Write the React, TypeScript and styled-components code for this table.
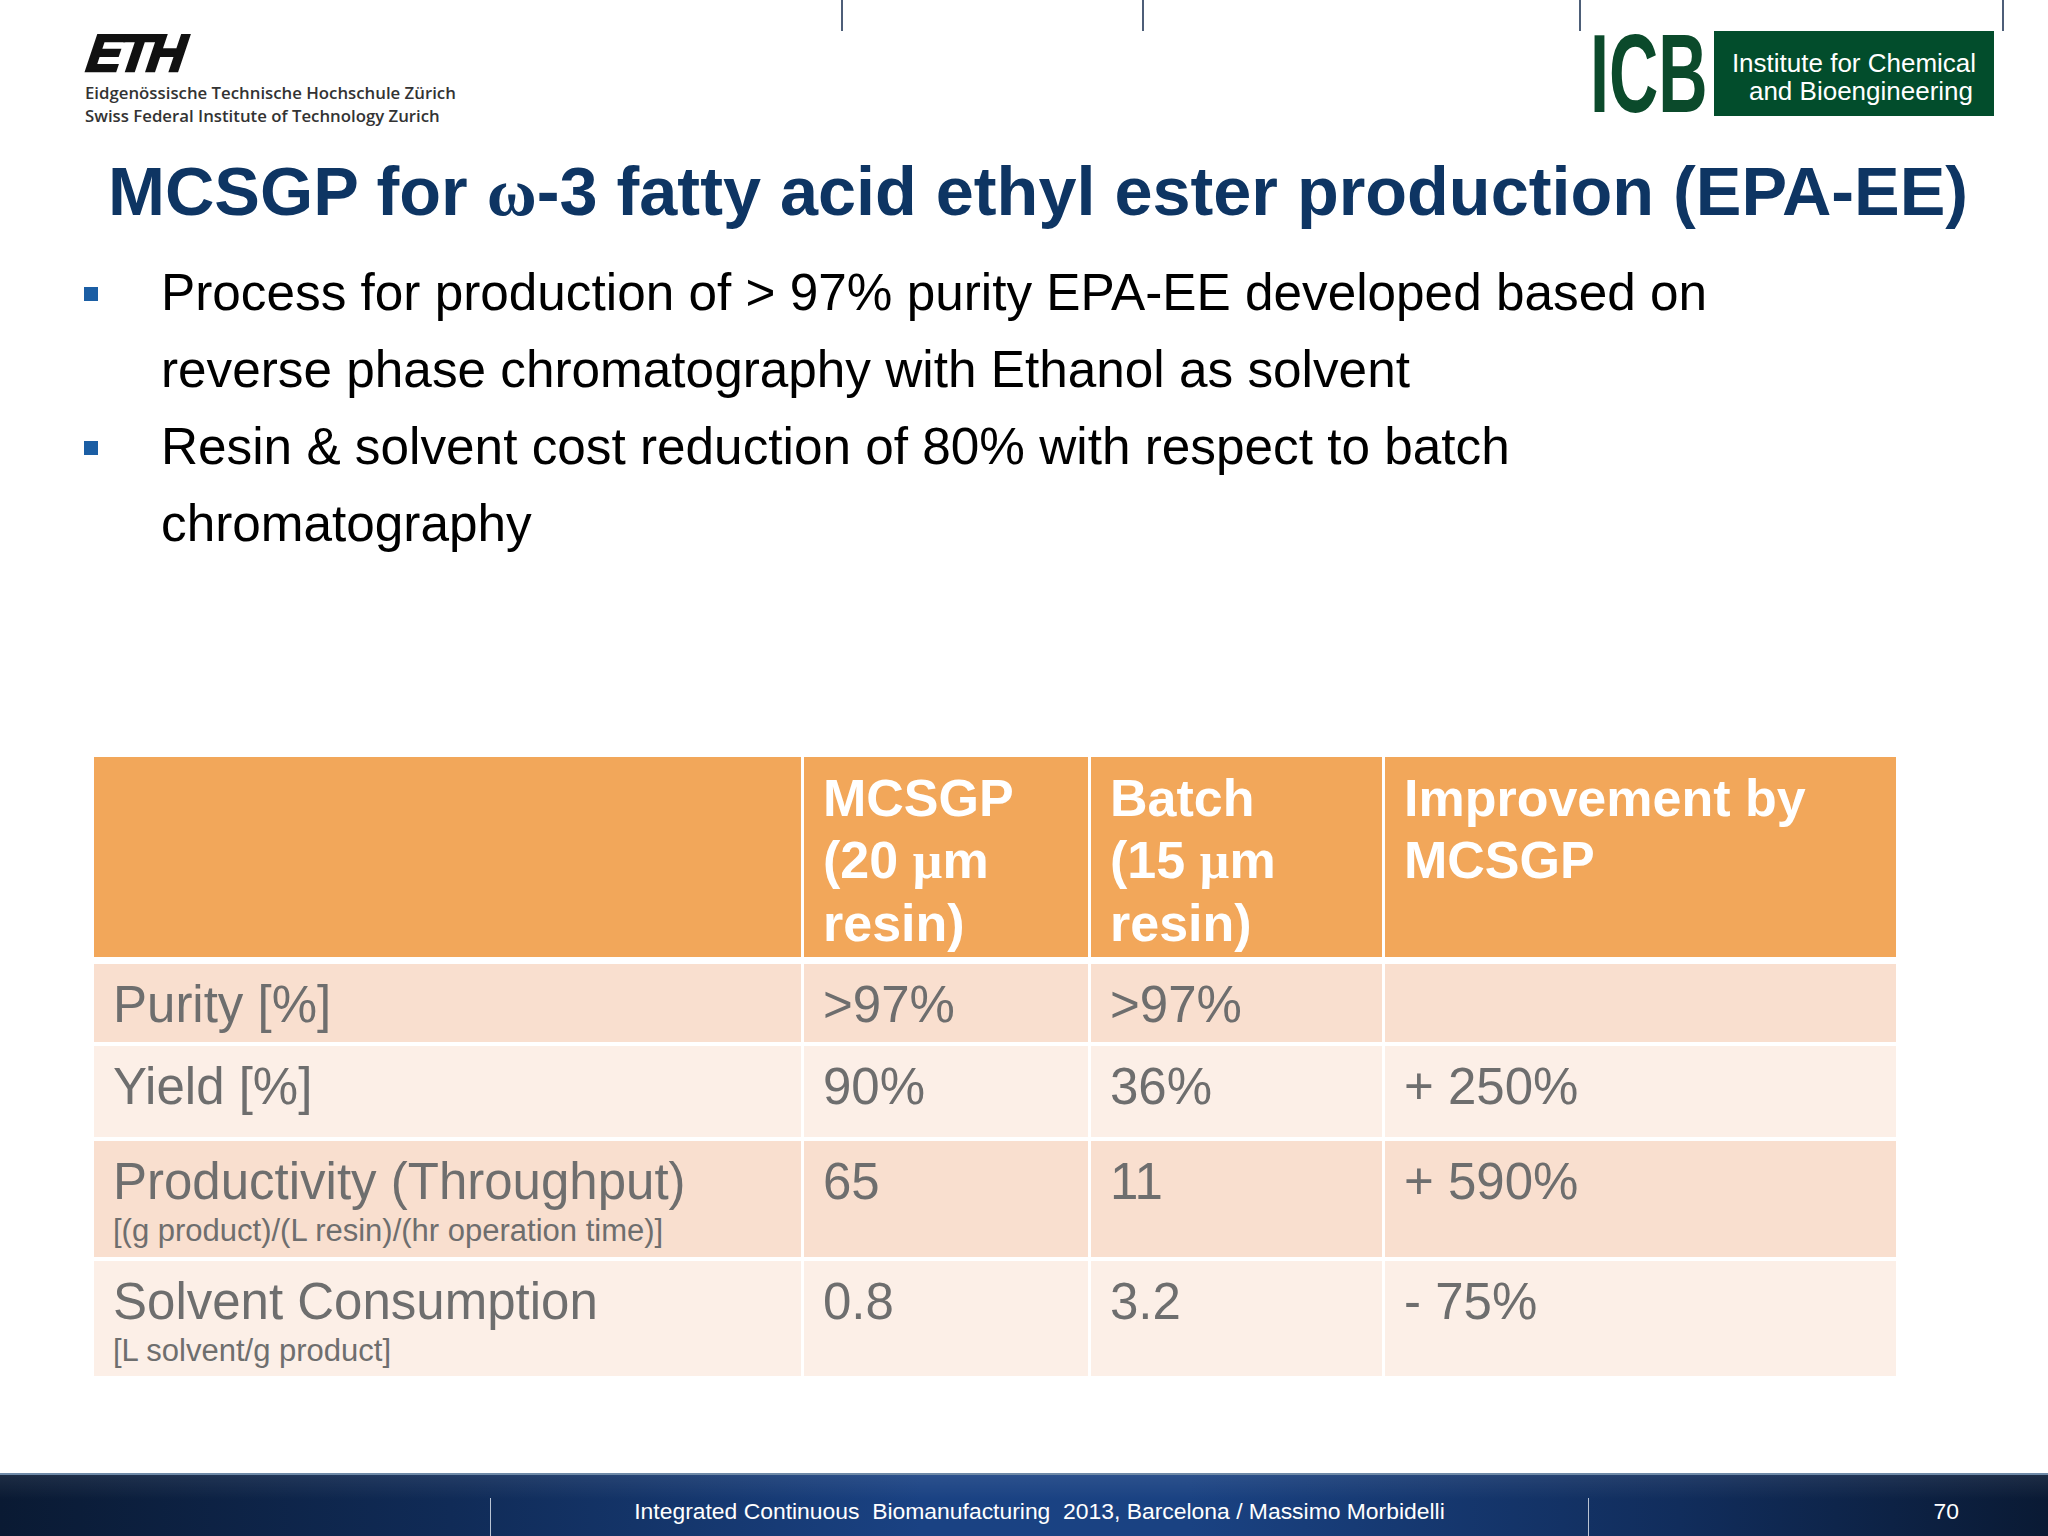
import React from "react";
import styled, { createGlobalStyle } from "styled-components";

const GlobalStyle = createGlobalStyle`
  html, body { margin: 0; padding: 0; background: #ffffff; }
  body { font-family: "Liberation Sans", Arial, sans-serif; }
`;

const Slide = styled.div`
  position: relative;
  width: 2048px;
  height: 1536px;
  display: flex;
  flex-direction: column;
  background: #ffffff;
  overflow: hidden;
`;

const Tick = styled.span<{ $x: number }>`
  position: absolute;
  top: 0;
  left: ${(p) => p.$x}px;
  width: 2px;
  height: 31px;
  background: #4d5e78;
`;

const Header = styled.header`
  display: flex;
  justify-content: space-between;
  align-items: flex-start;
  box-sizing: border-box;
  height: 125px;
  padding: 31px 54px 0 85px;
`;

const EthBlock = styled.div`
  display: flex;
  flex-direction: column;
`;

const EthMark = styled.div`
  margin-top: 2px;
  font-family: "Liberation Sans", Arial, sans-serif;
  font-weight: 700;
  font-style: italic;
  font-size: 52px;
  line-height: 40px;
  letter-spacing: -3px;
  color: #111111;
  -webkit-text-stroke: 2.5px #111111;
  transform: skewX(-8deg);
  transform-origin: left bottom;
`;

const EthTagline = styled.div`
  margin-top: 8px;
  font-family: "Open Sans", "Noto Sans", sans-serif;
  font-weight: 600;
  font-size: 16.8px;
  line-height: 23px;
  color: #333333;
  white-space: nowrap;
`;

const IcbGroup = styled.div`
  display: flex;
  align-items: flex-start;
  gap: 10px;
`;

const IcbMark = styled.div`
  width: 114px;
  height: 84px;
  margin-top: 3px;
`;

const IcbLetters = styled.span`
  display: inline-block;
  font-family: "Liberation Sans", Arial, sans-serif;
  font-weight: 700;
  font-size: 111px;
  line-height: 80px;
  color: #0b4a2b;
  transform: scaleX(0.615);
  transform-origin: left top;
  white-space: nowrap;
`;

const IcbBox = styled.div`
  box-sizing: border-box;
  width: 280px;
  height: 85px;
  padding-top: 18px;
  background: #024d2c;
  color: #ffffff;
  font-family: "Liberation Sans", Arial, sans-serif;
  font-size: 26px;
  line-height: 28px;
  text-align: center;
  white-space: nowrap;
`;

const IcbLine = styled.span<{ $shift: number }>`
  display: block;
  padding-left: ${(p) => p.$shift}px;
`;

const Title = styled.h1`
  margin: 32px 0 0 108px;
  font-family: "Liberation Sans", Arial, sans-serif;
  font-weight: 700;
  font-size: 68.4px;
  line-height: 68px;
  color: #0e3563;
  white-space: nowrap;
`;

const Greek = styled.span`
  font-family: "Liberation Serif", "DejaVu Serif", serif;
  font-weight: 700;
`;

const BulletList = styled.ul`
  list-style: none;
  margin: 28px 0 0 0;
  padding: 0 0 0 84px;
  display: flex;
  flex-direction: column;
`;

const BulletItem = styled.li`
  display: flex;
  align-items: flex-start;
  gap: 63px;
`;

const Marker = styled.span`
  flex: none;
  width: 14px;
  height: 14px;
  margin-top: 33px;
  background: #1b5ea4;
`;

const BulletText = styled.span`
  width: 1600px;
  font-family: "Liberation Sans", Arial, sans-serif;
  font-size: 51.3px;
  line-height: 77px;
  color: #000000;
`;

const Table = styled.div`
  margin: 195px 0 0 94px;
  width: 1802px;
  display: flex;
  flex-direction: column;
  gap: 4px;
`;

const columns = "707px 284px 291px 511px";

const HeadRow = styled.div`
  display: grid;
  grid-template-columns: ${columns};
  grid-template-rows: 100%;
  column-gap: 3px;
  height: 200px;
  margin-bottom: 3px;
`;

const HeadCell = styled.div`
  box-sizing: border-box;
  padding: 10px 19px 0;
  overflow: hidden;
  background: #f2a75a;
  color: #ffffff;
  font-family: "Liberation Sans", Arial, sans-serif;
  font-weight: 700;
  font-size: 52px;
  line-height: 62px;
`;

const BodyRow = styled.div<{ $h: number }>`
  display: grid;
  grid-template-columns: ${columns};
  grid-template-rows: 100%;
  column-gap: 3px;
  height: ${(p) => p.$h}px;
`;

const BodyCell = styled.div<{ $tone: "dark" | "light" }>`
  box-sizing: border-box;
  padding: 10px 19px 0;
  overflow: hidden;
  background: ${(p) => (p.$tone === "dark" ? "#f9dfcf" : "#fcefe7")};
  color: #6e6e6e;
  font-family: "Liberation Sans", Arial, sans-serif;
  font-size: 51px;
  line-height: 61px;
  white-space: nowrap;
`;

const SubLabel = styled.span`
  display: block;
  font-size: 31px;
  line-height: 37px;
`;

const Footer = styled.footer`
  margin-top: auto;
  height: 63px;
  display: flex;
  box-sizing: border-box;
  border-top: 2px solid #6f8aa8;
  background:
    linear-gradient(180deg, rgba(255, 255, 255, 0.08) 0%, rgba(0, 0, 0, 0) 40%),
    linear-gradient(90deg, #0a1a33 0%, #102b57 22%, #1a4283 45%, #1a4282 58%, #112d5c 82%, #0a1a34 100%);
  color: #ffffff;
  font-family: "Liberation Sans", Arial, sans-serif;
  font-size: 22.9px;
  line-height: 22px;
`;

const FooterLead = styled.div`
  width: 490px;
`;

const FooterSep = styled.span`
  width: 1px;
  margin-top: 23px;
  background: #b9c3d3;
`;

const FooterCenter = styled.div`
  flex: 1;
  padding-top: 25px;
  text-align: center;
  white-space: pre;
`;

const FooterPage = styled.div`
  width: 459px;
  box-sizing: border-box;
  padding: 25px 89px 0 0;
  text-align: right;
`;

const rows = [
  { h: 78, tone: "dark" as const, label: "Purity [%]", sub: "", a: ">97%", b: ">97%", c: "" },
  { h: 91, tone: "light" as const, label: "Yield [%]", sub: "", a: "90%", b: "36%", c: "+ 250%" },
  {
    h: 116,
    tone: "dark" as const,
    label: "Productivity (Throughput)",
    sub: "[(g product)/(L resin)/(hr operation time)]",
    a: "65",
    b: "11",
    c: "+ 590%",
  },
  {
    h: 115,
    tone: "light" as const,
    label: "Solvent Consumption",
    sub: "[L solvent/g product]",
    a: "0.8",
    b: "3.2",
    c: "- 75%",
  },
];

export default function App() {
  return (
    <Slide>
      <GlobalStyle />
      {[841, 1142, 1579, 2002].map((x) => (
        <Tick key={x} $x={x} />
      ))}
      <Header>
        <EthBlock>
          <EthMark>ETH</EthMark>
          <EthTagline>
            Eidgenössische Technische Hochschule Zürich
            <br />
            Swiss Federal Institute of Technology Zurich
          </EthTagline>
        </EthBlock>
        <IcbGroup>
          <IcbMark>
            <IcbLetters>ICB</IcbLetters>
          </IcbMark>
          <IcbBox>
            <IcbLine $shift={0}>Institute for Chemical</IcbLine>
            <IcbLine $shift={14}>and Bioengineering</IcbLine>
          </IcbBox>
        </IcbGroup>
      </Header>

      <Title>
        MCSGP for <Greek>ω</Greek>-3 fatty acid ethyl ester production (EPA-EE)
      </Title>

      <BulletList>
        <BulletItem>
          <Marker />
          <BulletText>
            Process for production of &gt; 97% purity EPA-EE developed based on reverse phase
            chromatography with Ethanol as solvent
          </BulletText>
        </BulletItem>
        <BulletItem>
          <Marker />
          <BulletText>Resin &amp; solvent cost reduction of 80% with respect to batch chromatography</BulletText>
        </BulletItem>
      </BulletList>

      <Table>
        <HeadRow>
          <HeadCell />
          <HeadCell>
            MCSGP
            <br />
            (20 <Greek>µ</Greek>m
            <br />
            resin)
          </HeadCell>
          <HeadCell>
            Batch
            <br />
            (15 <Greek>µ</Greek>m
            <br />
            resin)
          </HeadCell>
          <HeadCell>
            Improvement by
            <br />
            MCSGP
          </HeadCell>
        </HeadRow>
        {rows.map((r) => (
          <BodyRow key={r.label} $h={r.h}>
            <BodyCell $tone={r.tone}>
              {r.label}
              {r.sub && <SubLabel>{r.sub}</SubLabel>}
            </BodyCell>
            <BodyCell $tone={r.tone}>{r.a}</BodyCell>
            <BodyCell $tone={r.tone}>{r.b}</BodyCell>
            <BodyCell $tone={r.tone}>{r.c}</BodyCell>
          </BodyRow>
        ))}
      </Table>

      <Footer>
        <FooterLead />
        <FooterSep />
        <FooterCenter>
          {"Integrated Continuous  Biomanufacturing  2013, Barcelona / Massimo Morbidelli"}
        </FooterCenter>
        <FooterSep />
        <FooterPage>70</FooterPage>
      </Footer>
    </Slide>
  );
}
